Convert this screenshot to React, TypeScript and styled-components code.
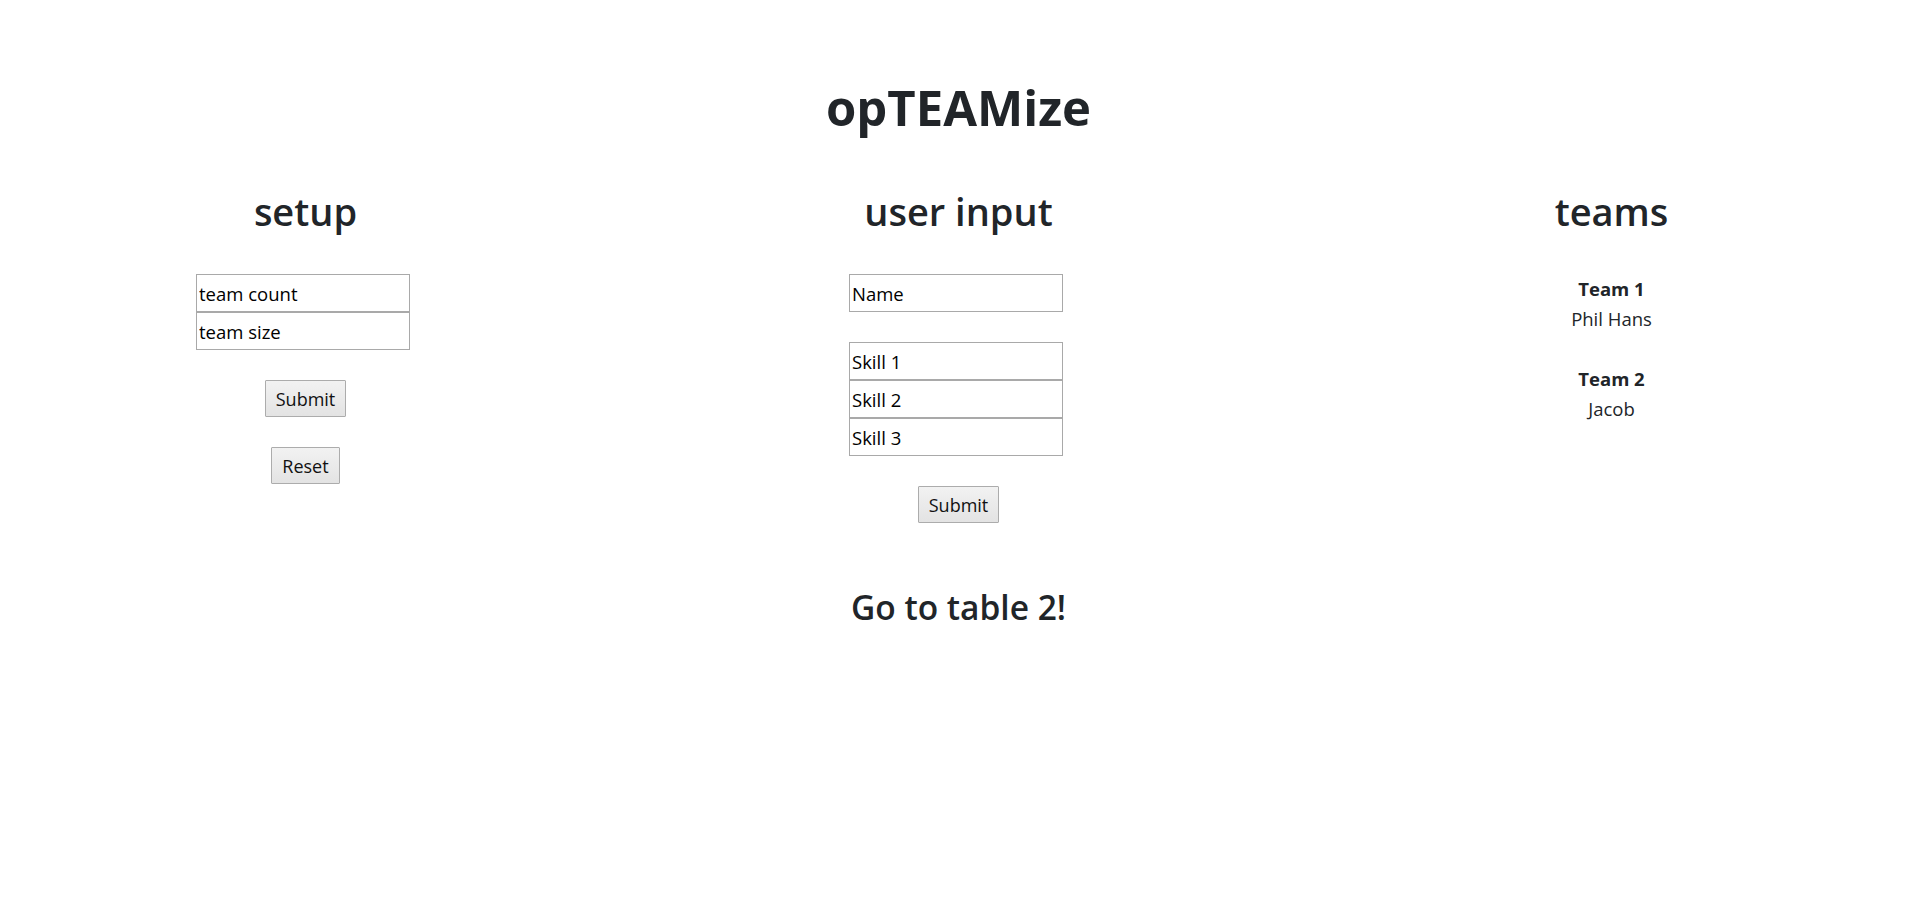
import React from 'react'
import styled, { createGlobalStyle } from 'styled-components'

const GlobalStyle = createGlobalStyle`
  html, body {
    margin: 0;
    background: #fff;
  }
  body {
    font-family: "Open Sans", "Noto Sans", "Liberation Sans", sans-serif;
    font-size: 18.5px;
    line-height: 30px;
    color: #212529;
  }
`

const Page = styled.main`
  padding: 77px 0 40px;
  overflow-x: clip;
`

const Title = styled.h1`
  margin: 0;
  text-align: center;
  font-size: 49px;
  line-height: 60px;
  font-weight: 700;
`

const Row = styled.div`
  display: grid;
  grid-template-columns: repeat(3, 1fr);
  margin: 50px -21px 0;
`

const Column = styled.section`
  display: flex;
  flex-direction: column;
  align-items: center;
  gap: 30px;
  text-align: center;
`

const Heading = styled.h2`
  margin: 0 0 9px;
  font-size: 38px;
  line-height: 48px;
  font-weight: 600;
`

const FieldStack = styled.div`
  display: flex;
  flex-direction: column;
  margin-right: 5px;
`

const Field = styled.input`
  box-sizing: border-box;
  width: 214px;
  height: 38px;
  margin: 0;
  padding: 0 2px;
  border: 1px solid #a9a9a9;
  background: #fff;
  font-family: inherit;
  font-size: 18.5px;
  line-height: normal;
  color: #000;
  outline: none;

  &::placeholder {
    color: #000;
    opacity: 1;
  }
`

const Button = styled.button`
  box-sizing: border-box;
  height: 37px;
  margin: 0;
  padding: 0 10px;
  border: 1px solid #acacac;
  border-radius: 1px;
  background: linear-gradient(#f2f2f2, #e3e3e3);
  font-family: inherit;
  font-size: 18px;
  line-height: normal;
  color: #111;
  cursor: pointer;
`

const Team = styled.div`
  display: flex;
  flex-direction: column;
`

const TeamName = styled.strong`
  font-weight: 700;
`

const Footer = styled.h3`
  margin: 64px 0 0;
  text-align: center;
  font-size: 33.5px;
  line-height: 40px;
  font-weight: 600;
`

const teams = [
  { name: 'Team 1', members: ['Phil Hans'] },
  { name: 'Team 2', members: ['Jacob'] },
]

export default function App() {
  return (
    <Page>
      <GlobalStyle />
      <Title>opTEAMize</Title>
      <Row>
        <Column>
          <Heading>setup</Heading>
          <FieldStack>
            <Field type="text" placeholder="team count" />
            <Field type="text" placeholder="team size" />
          </FieldStack>
          <Button>Submit</Button>
          <Button>Reset</Button>
        </Column>
        <Column>
          <Heading>user input</Heading>
          <FieldStack>
            <Field type="text" placeholder="Name" />
          </FieldStack>
          <FieldStack>
            <Field type="text" placeholder="Skill 1" />
            <Field type="text" placeholder="Skill 2" />
            <Field type="text" placeholder="Skill 3" />
          </FieldStack>
          <Button>Submit</Button>
        </Column>
        <Column>
          <Heading>teams</Heading>
          {teams.map((t) => (
            <Team key={t.name}>
              <TeamName>{t.name}</TeamName>
              {t.members.map((m) => (
                <span key={m}>{m}</span>
              ))}
            </Team>
          ))}
        </Column>
      </Row>
      <Footer>Go to table 2!</Footer>
    </Page>
  )
}
